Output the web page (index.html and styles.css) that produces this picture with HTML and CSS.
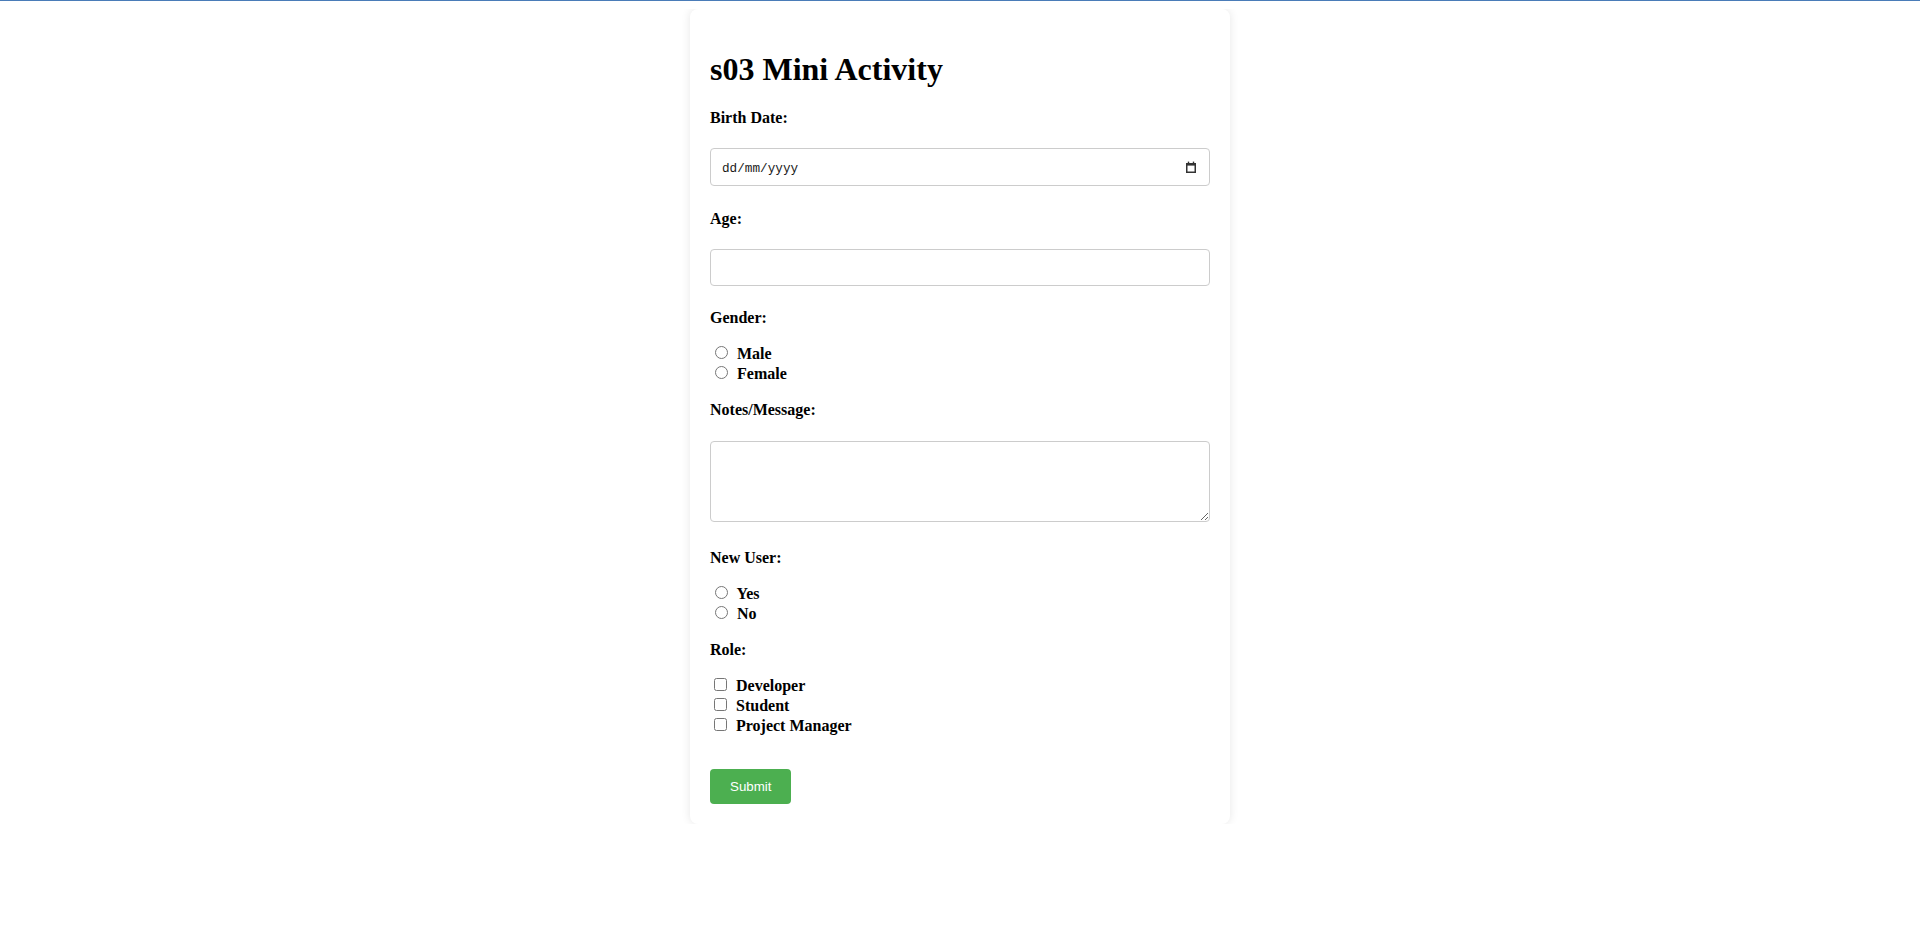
FILE: index.html
```html
<!DOCTYPE html>
<html lang="en">
<head>
<meta charset="utf-8">
<title>s03 Mini Activity</title>
<link rel="stylesheet" href="styles.css">
</head>
<body>
<div class="card">
  <h1 class="title">s03 Mini Activity</h1>
  <form class="form">
    <label class="label label--first" for="birth">Birth Date:</label>
    <div class="date-field">
      <input class="date-input" type="text" id="birth" placeholder="dd/mm/yyyy">
      <svg class="cal-icon" width="12" height="12" viewBox="0 0 12 12" aria-hidden="true">
        <rect x="1.75" y="2.75" width="8.5" height="8.5" fill="none" stroke="#333" stroke-width="1.5"/>
        <rect x="1" y="2" width="10" height="2.6" fill="#333"/>
        <rect x="2.8" y="0.6" width="1.4" height="2" fill="#333"/>
        <rect x="7.8" y="0.6" width="1.4" height="2" fill="#333"/>
      </svg>
    </div>

    <label class="label" for="age">Age:</label>
    <input class="text-input" type="text" id="age">

    <span class="label label--gender label--before-options">Gender:</span>
    <div class="options">
      <label class="option"><input class="choice choice--radio" type="radio" name="gender"> Male</label>
      <label class="option"><input class="choice choice--radio" type="radio" name="gender"> Female</label>
    </div>

    <label class="label label--after-options label--before-textarea" for="notes">Notes/Message:</label>
    <textarea class="notes" id="notes"></textarea>

    <span class="label label--after-textarea label--before-options">New User:</span>
    <div class="options">
      <label class="option"><input class="choice choice--radio" type="radio" name="newuser"> Yes</label>
      <label class="option"><input class="choice choice--radio" type="radio" name="newuser"> No</label>
    </div>

    <span class="label label--after-options label--role">Role:</span>
    <div class="options">
      <label class="option"><input class="choice choice--check" type="checkbox"> Developer</label>
      <label class="option"><input class="choice choice--check" type="checkbox"> Student</label>
      <label class="option"><input class="choice choice--check" type="checkbox"> Project Manager</label>
    </div>

    <button class="submit" type="submit">Submit</button>
  </form>
</div>
</body>
</html>
```

FILE: styles.css
```css
html {
  border-top: 1px solid #4a7cb8;
}

body {
  margin: 8px;
  background: #ffffff;
  color: #000000;
  font-family: "Liberation Serif", "Times New Roman", serif;
  font-size: 16px;
}

.card {
  width: 500px;
  margin: 0 auto;
  padding: 20px;
  background: #ffffff;
  border-radius: 8px;
  box-shadow: 0 0 10px rgba(0, 0, 0, 0.1);
}

.title {
  margin: 22px 0 0;
  font-size: 32px;
  font-weight: bold;
  line-height: 36.8px;
}

.form {
  margin: 0;
}

.label {
  display: block;
  margin: 24.6px 0 20.3px;
  font-weight: bold;
  font-size: 16px;
  line-height: 18.4px;
}

.label--first {
  margin-top: 21.3px;
}

.label--gender {
  margin-top: 23.2px;
}

.label--after-options {
  margin-top: 18.3px;
}

.label--after-textarea {
  margin-top: 27.8px;
}

.label--before-options {
  margin-bottom: 15px;
}

.label--before-textarea {
  margin-bottom: 21.2px;
}

.label--role {
  margin-bottom: 16px;
}

.date-field {
  display: flex;
  align-items: center;
  box-sizing: border-box;
  width: 100%;
  height: 38px;
  padding: 0 12px 0 11px;
  border: 1px solid #cccccc;
  border-radius: 4px;
  background: #ffffff;
}

.date-input {
  flex: 1;
  min-width: 0;
  margin-top: 3px;
  padding: 0;
  border: none;
  outline: none;
  background: transparent;
  font-family: "Liberation Mono", "Courier New", monospace;
  font-size: 12.7px;
  color: #111111;
}

.date-input::placeholder {
  color: #1a1a1a;
  opacity: 1;
}

.cal-icon {
  flex: none;
  display: block;
}

.text-input {
  display: block;
  box-sizing: border-box;
  width: 100%;
  height: 37px;
  padding: 0 10px;
  border: 1px solid #cccccc;
  border-radius: 4px;
  font-family: "Liberation Sans", Arial, sans-serif;
  font-size: 13.33px;
}

.notes {
  display: block;
  box-sizing: border-box;
  width: 100%;
  height: 81px;
  margin: 0;
  padding: 10px;
  border: 1px solid #cccccc;
  border-radius: 4px;
  font-family: "Liberation Mono", monospace;
  font-size: 13.33px;
}

.options {
  display: block;
}

.option {
  display: block;
  font-weight: bold;
  font-size: 16px;
  line-height: normal;
}

.choice {
  width: 13px;
  height: 13px;
  vertical-align: baseline;
}

.choice--radio {
  margin: 3px 5px 0 5px;
}

.choice--check {
  margin: 3px 5px 3px 4px;
}

.submit {
  display: block;
  height: 35px;
  margin-top: 33.5px;
  padding: 0 20px;
  border: none;
  border-radius: 4px;
  background: #4caf50;
  color: #ffffff;
  font-family: "Liberation Sans", Arial, sans-serif;
  font-size: 13.33px;
  cursor: pointer;
}
```
